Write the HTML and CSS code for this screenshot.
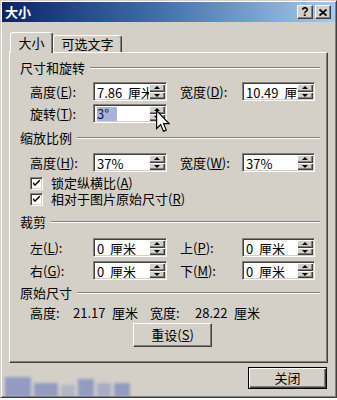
FILE: index.html
```html
<!DOCTYPE html>
<html lang="zh-CN">
<head>
    <meta charset="UTF-8">
    <title>大小</title>
    <link rel="stylesheet" href="styles.css">
</head>
<body>
    <div class="window">
        <div class="titlebar">
            <span class="title">大小</span>
            <div class="caption-btns">
                <span class="cap-btn help">?</span>
                <span class="cap-btn">
                    <svg width="8" height="7" viewBox="0 0 8 7"><path d="M0.5 0.5 L7.5 6.5 M7.5 0.5 L0.5 6.5" stroke="#000" stroke-width="1.8"/></svg>
                </span>
            </div>
        </div>

        <div class="body">
            <div class="tabs">
                <div class="tab active">大小</div>
                <div class="tab">可选文字</div>
            </div>

            <div class="panel">
                <div class="group-head"><span>尺寸和旋转</span><i class="rule"></i></div>
                <div class="row first">
                    <span class="lbl">高度(<u>E</u>):</span>
                    <div class="field"><span class="val">7.86  厘米</span><span class="spin"><i class="up"></i><i class="down"></i></span></div>
                    <span class="lbl r">宽度(<u>D</u>):</span>
                    <div class="field w"><span class="val">10.49  厘米</span><span class="spin"><i class="up"></i><i class="down"></i></span></div>
                </div>
                <div class="row">
                    <span class="lbl">旋转(<u>T</u>):</span>
                    <div class="field"><span class="val"><span class="sel">3°</span></span><span class="spin"><i class="up"></i><i class="down"></i></span></div>
                </div>

                <div class="group-head g2"><span>缩放比例</span><i class="rule"></i></div>
                <div class="row first">
                    <span class="lbl">高度(<u>H</u>):</span>
                    <div class="field"><span class="val">37%</span><span class="spin"><i class="up"></i><i class="down"></i></span></div>
                    <span class="lbl r">宽度(<u>W</u>):</span>
                    <div class="field w"><span class="val">37%</span><span class="spin"><i class="up"></i><i class="down"></i></span></div>
                </div>
                <div class="check c1">
                    <span class="box"><svg width="7" height="7" viewBox="0 0 7 7"><path d="M0 2 L0 4 L2 6 L7 1 L7 -1 L2 4 Z" fill="#000"/></svg></span>
                    <span>锁定纵横比(<u>A</u>)</span>
                </div>
                <div class="check">
                    <span class="box"><svg width="7" height="7" viewBox="0 0 7 7"><path d="M0 2 L0 4 L2 6 L7 1 L7 -1 L2 4 Z" fill="#000"/></svg></span>
                    <span>相对于图片原始尺寸(<u>R</u>)</span>
                </div>

                <div class="group-head g3"><span>裁剪</span><i class="rule"></i></div>
                <div class="row crop1">
                    <span class="lbl">左(<u>L</u>):</span>
                    <div class="field"><span class="val">0  厘米</span><span class="spin"><i class="up"></i><i class="down"></i></span></div>
                    <span class="lbl r">上(<u>P</u>):</span>
                    <div class="field w"><span class="val">0  厘米</span><span class="spin"><i class="up"></i><i class="down"></i></span></div>
                </div>
                <div class="row crop2">
                    <span class="lbl">右(<u>G</u>):</span>
                    <div class="field"><span class="val">0  厘米</span><span class="spin"><i class="up"></i><i class="down"></i></span></div>
                    <span class="lbl r">下(<u>M</u>):</span>
                    <div class="field w"><span class="val">0  厘米</span><span class="spin"><i class="up"></i><i class="down"></i></span></div>
                </div>

                <div class="group-head g4"><span>原始尺寸</span><i class="rule"></i></div>
                <div class="info">
                    <span class="k">高度:</span><span class="n">21.17</span><span class="u">厘米</span><span class="k2">宽度:</span><span class="n">28.22</span><span>厘米</span>
                </div>
                <div class="reset-row">
                    <button class="btn reset">重设(<u>S</u>)</button>
                </div>
            </div>

            <div class="footer">
                <button class="btn default">关闭</button>
            </div>
        </div>

        <svg class="cursor" width="14" height="22" viewBox="0 0 12 19">
            <path d="M0.5 0.5 V16 L4 12.6 L6.4 18.4 L8.8 17.4 L6.5 11.8 H11.2 Z" fill="#fff" stroke="#000" stroke-width="1" stroke-linejoin="miter"/>
        </svg>

        <div class="watermark">
            <i class="wm a"></i><i class="wm b"></i><i class="wm c"></i><i class="wm d"></i><i class="wm e"></i><i class="wm f"></i>
        </div>
    </div>
</body>
</html>
```

FILE: styles.css
```css
/* Classic dialog */
body {
    margin: 0;
    padding: 0;
    background-color: #fff;
    font-family: "Noto Sans CJK SC", sans-serif;
    font-size: 13px;
    line-height: 16px;
    color: #000;
}

u {
    text-decoration: underline;
    text-underline-offset: 1px;
}

.window {
    position: relative;
    width: 337px;
    height: 398px;
    box-sizing: border-box;
    padding: 1px;
    overflow: hidden;
    background-color: #d4d0c8;
    border: 1px solid;
    border-color: #d4d0c8 #404040 #404040 #d4d0c8;
    box-shadow: inset 1px 1px #fff, inset -1px -1px #808080;
}

/* Title bar */
.titlebar {
    height: 20px;
    display: flex;
    align-items: center;
    justify-content: space-between;
    padding: 0 4px 0 3px;
    background: linear-gradient(to right, #0a246a, #3a6ea5 45%, #a6caf0);
}

.title {
    color: #fff;
    font-weight: bold;
    font-size: 13px;
}

.caption-btns {
    display: flex;
    gap: 2px;
}

.cap-btn {
    width: 16px;
    height: 14px;
    box-sizing: border-box;
    display: flex;
    align-items: center;
    justify-content: center;
    background-color: #d4d0c8;
    border: 1px solid;
    border-color: #fff #404040 #404040 #fff;
    box-shadow: inset -1px -1px #808080;
}

.cap-btn.help {
    font-family: "Liberation Sans", sans-serif;
    font-weight: bold;
    font-size: 12px;
    line-height: 12px;
}

/* Body */
.body {
    padding: 10px 7px 0;
}

.tabs {
    display: flex;
    align-items: flex-end;
    height: 20px;
    margin-left: 1px;
}

.tab {
    height: 17px;
    box-sizing: border-box;
    display: flex;
    align-items: center;
    justify-content: center;
    width: 69px;
    border: 1px solid;
    border-bottom: none;
    border-color: #fff #404040 transparent #fff;
    border-radius: 3px 3px 0 0;
    box-shadow: inset -1px 0 #808080;
    background-color: #d4d0c8;
}

.tab.active {
    width: 43px;
    height: 21px;
    margin-bottom: -1px;
    position: relative;
    z-index: 1;
}

.panel {
    height: 311px;
    box-sizing: border-box;
    padding: 7px 7px 0 10px;
    display: flex;
    flex-direction: column;
    border: 1px solid;
    border-color: #fff #404040 #404040 #fff;
    box-shadow: inset -1px -1px #808080;
}

/* Group headers */
.group-head {
    height: 16px;
    display: flex;
    align-items: center;
}

.group-head .rule {
    flex: 1;
    height: 0;
    margin-left: 5px;
    border-top: 1px solid #808080;
    border-bottom: 1px solid #fff;
}

.g2 { margin-top: 7px; }
.g3 { margin-top: 7px; }
.g4 { margin-top: 5px; }

/* Rows */
.row {
    height: 19px;
    display: flex;
    align-items: center;
    padding-left: 10px;
    margin-top: 3px;
}

.row.first { margin-top: 6px; }
.g2 + .row.first { margin-top: 7px; }
.row.crop1 { margin-top: 8px; }
.row.crop2 { margin-top: 4px; }

.lbl {
    width: 63px;
    white-space: nowrap;
}

.lbl.r {
    width: 62px;
    margin-left: 13px;
}

.field {
    width: 74px;
    height: 19px;
    box-sizing: border-box;
    display: flex;
    padding: 1px;
    background-color: #fff;
    border: 1px solid;
    border-color: #808080 #fff #fff #808080;
    box-shadow: inset 1px 1px #404040, inset -1px -1px #d4d0c8;
}

.field.w {
    width: 73px;
}

.val {
    flex: 1;
    overflow: hidden;
    white-space: pre;
    padding: 1px 0 0 2px;
    line-height: 15px;
}

.sel {
    display: inline-block;
    width: 20px;
    line-height: 14px;
    vertical-align: top;
    background-color: #a9b3d6;
    color: #0a1a5a;
}

.spin {
    width: 16px;
    display: flex;
    flex-direction: column;
}

.spin i {
    flex: 1;
    display: flex;
    align-items: center;
    justify-content: center;
    background-color: #d4d0c8;
    box-shadow: inset 1px 1px #fff, inset -1px -1px #404040, inset -2px -2px #808080;
}

.spin i::before {
    content: "";
    border-left: 3px solid transparent;
    border-right: 3px solid transparent;
}

.spin .up::before { border-bottom: 3px solid #000; }
.spin .down::before { border-top: 3px solid #000; }

/* Checkboxes */
.check {
    height: 16px;
    display: flex;
    align-items: center;
    gap: 8px;
    padding-left: 10px;
}

.check.c1 { margin-top: 3px; }

.box {
    width: 13px;
    height: 13px;
    box-sizing: border-box;
    display: flex;
    align-items: center;
    justify-content: center;
    background-color: #fff;
    border: 1px solid;
    border-color: #808080 #fff #fff #808080;
    box-shadow: inset 1px 1px #404040, inset -1px -1px #d4d0c8;
}

/* Original size */
.info {
    height: 16px;
    margin-top: 4px;
    padding-left: 10px;
    display: flex;
    white-space: nowrap;
}

.info .k { width: 43px; }
.info .n { width: 39px; }
.info .u { width: 38px; }
.info .k2 { width: 45px; }

.reset-row {
    margin-top: 2px;
    display: flex;
}

.btn {
    font-family: inherit;
    font-size: 13px;
    line-height: 16px;
    color: #000;
    padding: 0;
    background-color: #d4d0c8;
    border: 1px solid;
    border-color: #fff #404040 #404040 #fff;
    box-shadow: inset -1px -1px #808080;
}

.btn.reset {
    width: 79px;
    height: 24px;
    margin-left: 113px;
}

.footer {
    display: flex;
    justify-content: flex-end;
    margin-top: 4px;
    padding-right: 1px;
}

.btn.default {
    width: 79px;
    height: 22px;
    border-color: #000;
    box-shadow: inset 1px 1px #fff, inset -1px -1px #404040, inset -2px -2px #808080;
}

/* Overlays */
.cursor {
    position: absolute;
    left: 155px;
    top: 109px;
}

.watermark {
    position: absolute;
    left: 4px;
    top: 376px;
    display: flex;
    gap: 3px;
    filter: blur(1.5px);
}

.wm {
    display: block;
    height: 20px;
    background-color: #6878bc;
    opacity: 0.6;
}

.wm.a { width: 26px; }
.wm.b { width: 24px; margin-top: 6px; height: 14px; }
.wm.c { width: 14px; margin-top: 8px; height: 12px; opacity: 0.3; }
.wm.d { width: 16px; margin-top: 2px; height: 18px; }
.wm.e { width: 14px; margin-top: 6px; height: 14px; opacity: 0.4; }
.wm.f { width: 16px; margin-top: 6px; height: 14px; }
```
